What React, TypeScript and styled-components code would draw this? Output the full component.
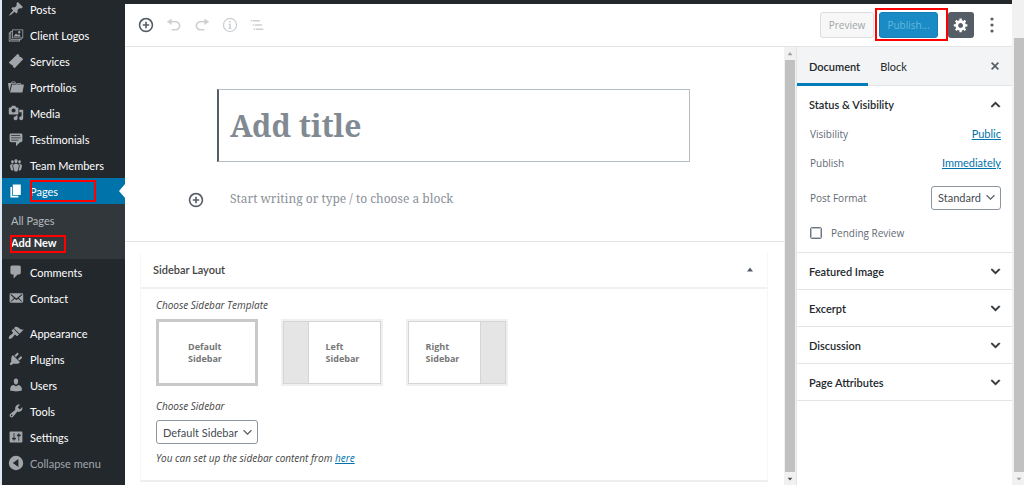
import React from "react";
import styled, { createGlobalStyle } from "styled-components";

const UI_FONT = `Lato, "Noto Sans", "Liberation Sans", sans-serif`;
const NOTE_FONT = `"Open Sans", "Noto Sans", "Liberation Sans", sans-serif`;
const SERIF_FONT = `"Noto Serif", "DejaVu Serif", serif`;

const GlobalStyle = createGlobalStyle`
  *, *::before, *::after { box-sizing: border-box; }
  body { margin: 0; background: #fff; }
  body, button, input, select, textarea {
    font-family: ${UI_FONT};
    font-size: 11px;
  }
  h2, p, ul, fieldset { margin: 0; padding: 0; }
  ul { list-style: none; }
`;

const ICONS = {
  pin: "M10.44 3.02l1.82-1.82 6.36 6.35-1.83 1.82c-1.05-.68-2.48-.57-3.41.36l-.75.75c-.92.93-1.04 2.35-.35 3.41l-1.83 1.82-2.41-2.41-2.8 2.79c-.42.42-3.38 2.71-3.8 2.29s1.86-3.39 2.28-3.81l2.79-2.79L4.1 9.36l1.83-1.82c1.05.69 2.48.57 3.4-.36l.75-.75c.93-.92 1.05-2.35.36-3.41z",
  images:
    "M5 3h14v11h-2v2h-2v2H1V7h2V5h2V3zm13 10V4H6v9h12zm-2-1H7l3-4 2 2 2-1zm-2-4a1.5 1.5 0 1 0 0-3 1.5 1.5 0 0 0 0 3zM16 15v-1H5V6H4v9h12zM14 17v-1H3V8H2v9h12z",
  ticket:
    "M12.2 1l2 2c-.5 1 .9 2.6 2.1 2l2.7 2.8L8.2 19l-2.2-2.1c.6-1.2-.9-2.7-2.1-2.100L1 12z",
  folder:
    "M4 5H.78c-.37 0-.74.32-.69.84l1.56 9.99S3.5 8.47 3.86 6.7c.11-.53.61-.7.98-.7H10s-.7-2.08-.77-2.31C9.11 3.25 8.89 3 8.45 3H5.14c-.36 0-.7.23-.8.64C4.25 4.04 4 5 4 5zm4.88 0h-4s.42-1 .87-1h2.13c.48 0 1 1 1 1zM2.67 16.25c-.31.47-.76.75-1.26.75h15.73c.54 0 .92-.31 1.03-.83.44-2.19 1.68-8.44 1.68-8.44.07-.5-.3-.73-.62-.73H16V5.53c0-.16-.26-.53-.66-.53h-3.76c-.52 0-.87.58-.87.58L10 7H5.59c-.32 0-.63.19-.69.5 0 0-1.59 6.7-1.72 7.33-.07.37-.22.99-.51 1.42zM15.38 7H11s.58-1 1.13-1h2.29c.71 0 .96 1 .96 1z",
  media:
    "M13 11V4c0-.55-.45-1-1-1h-1.67L9 1H5L3.67 3H2c-.55 0-1 .45-1 1v7c0 .55.45 1 1 1h10c.55 0 1-.45 1-1zM7 4.5c1.38 0 2.5 1.12 2.5 2.5S8.38 9.5 7 9.5 4.5 8.38 4.5 7 5.62 4.5 7 4.5zM14 6h5v10.5c0 1.38-1.12 2.5-2.5 2.5S14 17.88 14 16.5s1.12-2.5 2.5-2.5c.17 0 .34.02.5.05V9h-3V6zm-4 8.05V13h2v3.5c0 1.38-1.12 2.5-2.5 2.5S7 17.88 7 16.5 8.12 14 9.5 14c.17 0 .34.02.5.05z",
  testimonial:
    "M4 3h12c.55 0 1.02.2 1.41.59S18 4.45 18 5v7c0 .55-.2 1.02-.59 1.41S16.55 14 16 14h-1l-5 5v-5H4c-.55 0-1.02-.2-1.41-.59S2 12.55 2 12V5c0-.55.2-1.02.59-1.41S3.45 3 4 3zm11 2H4v1h11V5zm1 3H4v1h12V8zm-3 3H4v1h9v-1z",
  groups:
    "M8.03 4.46c-.29 1.28.55 3.46 1.97 3.46 1.41 0 2.25-2.18 1.96-3.46-.22-.98-1.08-1.63-1.96-1.63-.89 0-1.74.65-1.97 1.63zm-4.13.9c-.25 1.08.47 2.93 1.67 2.93s1.92-1.85 1.67-2.93c-.19-.83-.92-1.39-1.67-1.39s-1.48.56-1.67 1.39zm8.86 0c-.25 1.08.47 2.93 1.66 2.93 1.2 0 1.92-1.85 1.67-2.93-.19-.83-.92-1.39-1.67-1.39-.74 0-1.47.56-1.66 1.39zm-.59 11.43l1.25-4.3C14.2 10 12.71 8.47 10 8.47c-2.72 0-4.21 1.53-3.44 4.02l1.26 4.3C8.05 17.51 9 18 10 18c.98 0 1.94-.49 2.17-1.21zm-6.1-7.63c-.49.67-.96 1.83-.42 3.59l1.12 3.79c-.34.2-.77.31-1.2.31-.85 0-1.65-.41-1.85-1.03l-1.07-3.65c-.65-2.11.61-3.4 2.92-3.4.27 0 .54.02.79.06-.1.1-.2.22-.29.33zm8.35-.39c2.31 0 3.58 1.29 2.92 3.4l-1.07 3.65c-.2.62-1 1.03-1.85 1.03-.43 0-.86-.11-1.2-.31l1.11-3.77c.55-1.78.08-2.94-.42-3.61-.08-.11-.18-.23-.28-.33.25-.04.51-.06.79-.06z",
  page: "M6 15V2h10v13H6zm-1 1h8v2H3V5h2v11z",
  comment: "M5 2h9c1.1 0 2 .9 2 2v7c0 1.1-.9 2-2 2h-2l-5 5v-5H5c-1.1 0-2-.9-2-2V4c0-1.1.9-2 2-2z",
  email:
    "M19 14.5v-9c0-.83-.67-1.5-1.5-1.5H3.49c-.83 0-1.5.67-1.5 1.5v9c0 .83.67 1.5 1.5 1.5H17.5c.83 0 1.5-.67 1.5-1.5zm-1.31-9.11c.33.33.15.67-.03.84L13.6 9.95l3.9 4.06c.12.14.2.36.06.51-.13.16-.43.15-.56.05l-4.37-3.73-2.14 1.95-2.13-1.95-4.37 3.73c-.13.1-.43.11-.56-.05-.14-.15-.06-.37.06-.51l3.9-4.06-4.06-3.72c-.18-.17-.36-.51-.03-.84s.67-.17.95.07l6.24 5.04 6.25-5.04c.28-.24.62-.4.95-.07z",
  brush:
    "M14.48 11.06L7.41 3.99l1.5-1.5c.5-.56 2.3-.47 3.51.32 1.21.8 1.43 1.28 2.91 2.1 1.18.64 2.45 1.26 4.45.85zm-.71.71L6.7 4.7 4.93 6.47c-.39.39-.39 1.02 0 1.41l1.06 1.06c.39.39.39 1.03 0 1.42-.6.6-1.43 1.11-2.21 1.69-.35.26-.7.53-1.01.84C1.43 14.23.4 16.08 1.4 17.07c.99 1 2.84-.03 4.18-1.36.31-.31.58-.66.85-1.02.57-.78 1.08-1.61 1.69-2.21.39-.39 1.02-.39 1.41 0l1.06 1.06c.39.39 1.02.39 1.41 0z",
  plug: "M13.11 4.36L9.87 7.6 8 5.73l3.24-3.24c.35-.34 1.05-.2 1.56.32.52.51.66 1.21.31 1.55zm-8 1.77l.91-1.12 9.01 9.01-1.19.84c-.71.71-2.63 1.16-3.82 1.16H6.14L4.9 17.26c-.59.59-1.54.59-2.12 0-.59-.58-.59-1.53 0-2.12l1.24-1.24v-3.88c0-1.13.4-3.19 1.09-3.89zm7.26 3.97l3.24-3.24c.34-.35 1.04-.21 1.55.31.52.51.66 1.21.31 1.55l-3.24 3.25z",
  user: "M10 9.25c-2.27 0-2.73-3.44-2.73-3.44C7 4.02 7.82 2 9.97 2c2.16 0 2.98 2.02 2.71 3.81 0 0-.41 3.44-2.68 3.44zm0 2.57L12.72 10c2.39 0 4.52 2.33 4.52 4.53v2.49s-3.65 1.13-7.24 1.13c-3.65 0-7.24-1.13-7.24-1.13v-2.49c0-2.25 1.94-4.48 4.47-4.48z",
  wrench:
    "M16.68 9.77c-1.34 1.34-3.3 1.67-4.95.99l-5.41 6.52c-.99.99-2.59.99-3.58 0s-.99-2.59 0-3.57l6.52-5.42c-.68-1.65-.35-3.61.99-4.95 1.28-1.28 3.12-1.62 4.72-1.06l-2.89 2.89 2.82 2.82 2.86-2.87c.53 1.58.18 3.39-1.08 4.65zM3.81 16.21c.4.39 1.04.39 1.43 0 .4-.4.4-1.04 0-1.43-.39-.4-1.03-.4-1.43 0-.39.39-.39 1.03 0 1.43z",
  sliders:
    "M18 16V4c0-.55-.45-1-1-1H3c-.55 0-1 .45-1 1v12c0 .55.45 1 1 1h14c.55 0 1-.45 1-1zM8 11h1c.55 0 1 .45 1 1s-.45 1-1 1H8v1.5c0 .28-.22.5-.5.5s-.5-.22-.5-.5V13H6c-.55 0-1-.45-1-1s.45-1 1-1h1V5.5c0-.28.22-.5.5-.5s.5.22.5.5V11zm5-2h-1c-.55 0-1-.45-1-1s.45-1 1-1h1V5.5c0-.28.22-.5.5-.5s.5.22.5.5V7h1c.55 0 1 .45 1 1s-.45 1-1 1h-1v5.5c0 .28-.22.5-.5.5s-.5-.22-.5-.5V9z",
  collapse: "M10 1a9 9 0 1 0 0 18 9 9 0 0 0 0-18zM13 5v10l-7-5z",
  insert:
    "M10 1c-5 0-9 4-9 9s4 9 9 9 9-4 9-9-4-9-9-9zm0 16c-3.9 0-7-3.1-7-7s3.1-7 7-7 7 3.1 7 7-3.1 7-7 7zm1-11H9v3H6v2h3v3h2v-3h3V9h-3V6z",
  undo: "M12 5H7V2L1 6l6 4V7h5c2.2 0 4 1.8 4 4s-1.8 4-4 4H7v2h5c3.3 0 6-2.7 6-6s-2.7-6-6-6z",
  redo: "M8 5h5V2l6 4-6 4V7H8c-2.2 0-4 1.8-4 4s1.8 4 4 4h5v2H8c-3.3 0-6-2.7-6-6s2.7-6 6-6z",
  info: "M10 1a9 9 0 1 0 0 18 9 9 0 0 0 0-18zm0 16.4a7.4 7.4 0 1 1 0-14.8 7.4 7.4 0 0 1 0 14.8zM9 5h2v2H9zM8 8.5h3V14h1v1H8v-1h1V9.5H8z",
  outline: "M1 3h2v2H1zM4 3h10v2H4zM4 9h2v2H4zM7 9h10v2H7zM5 15h2v2H5zM8 15h11v2H8z",
  gear: "M18 12h-2.18c-.17.7-.44 1.35-.81 1.93l1.54 1.54-2.1 2.1-1.54-1.54c-.58.36-1.23.63-1.91.79V19H8v-2.18c-.68-.16-1.33-.43-1.91-.79l-1.54 1.54-2.12-2.12 1.54-1.54c-.36-.58-.63-1.23-.79-1.91H1V9.03h2.17c.16-.7.44-1.35.8-1.94L2.43 5.55l2.1-2.1 1.54 1.54c.58-.37 1.24-.64 1.93-.81V2h3v2.18c.68.16 1.33.43 1.91.79l1.54-1.54 2.12 2.12-1.54 1.54c.36.59.64 1.24.8 1.94H18V12zm-8.5 1.5c1.66 0 3-1.34 3-3s-1.34-3-3-3-3 1.34-3 3 1.34 3 3 3z",
  dots: "M10 4.500a2 2 0 1 0 0-4 2 2 0 0 0 0 4zM10 12a2 2 0 1 0 0-4 2 2 0 0 0 0 4zM10 19.500a2 2 0 1 0 0-4 2 2 0 0 0 0 4z",
  down: "M5 6l5 5 5-5 2 1-7 7-7-7z",
  up: "M15 14l-5-5-5 5-2-1 7-7 7 7z",
  close:
    "M14.95 6.46L11.41 10l3.54 3.54-1.41 1.41L10 11.42l-3.53 3.53-1.42-1.42L8.58 10 5.05 6.47l1.42-1.42L10 8.58l3.54-3.53z",
  triangleUp: "M4 13l6-8 6 8z",
  triangleDown: "M4 7h12l-6 7z",
};

type IconName = keyof typeof ICONS;

const Glyph = styled.svg<{ $size: number; $bold?: boolean }>`
  display: block;
  flex: none;
  width: ${(p) => p.$size}px;
  height: ${(p) => p.$size}px;
  fill: currentColor;
  stroke: ${(p) => (p.$bold ? "currentColor" : "none")};
`;

function Icon({ name, size = 16, bold }: { name: IconName; size?: number; bold?: boolean }) {
  return (
    <Glyph $size={size} $bold={bold} viewBox="0 0 20 20" aria-hidden="true">
      <path fillRule="evenodd" d={ICONS[name]} />
    </Glyph>
  );
}

const Page = styled.div`
  display: flex;
  height: 100vh;
  overflow: hidden;
  padding-left: 2px;
  background: #dfeaf5;
`;

/* Admin menu */

const AdminMenu = styled.nav`
  flex: none;
  width: 123px;
  overflow: hidden;
  background: #23282d;
`;

const MenuList = styled.ul`
  margin-top: -4px;
`;

const MenuItem = styled.li<{ $spaced?: boolean }>`
  margin-top: ${(p) => (p.$spaced ? 9 : 0)}px;
`;

const MenuLink = styled.a<{ $current?: boolean; $muted?: boolean }>`
  position: relative;
  display: flex;
  align-items: center;
  gap: 6px;
  height: 26px;
  padding-left: 6px;
  text-decoration: none;
  white-space: nowrap;
  color: ${(p) => (p.$muted ? "#a0a5aa" : "#fff")};
  background: ${(p) => (p.$current ? "#0073aa" : "transparent")};

  svg {
    color: ${(p) => (p.$current ? "#fff" : "#a0a5aa")};
  }
`;

const CurrentArrow = styled.span`
  position: absolute;
  top: 6px;
  right: 0;
  border: 7px solid transparent;
  border-left-width: 0;
  border-right: 6px solid #fff;
`;

const SubMenu = styled.ul`
  padding: 6px 0 5px;
  background: #32373c;
`;

const SubLink = styled.a<{ $current?: boolean }>`
  position: relative;
  display: block;
  height: 22px;
  padding-left: 9px;
  line-height: 22px;
  text-decoration: none;
  color: ${(p) => (p.$current ? "#fff" : "#b4b9be")};
  font-weight: ${(p) => (p.$current ? 700 : 400)};
`;

const Highlight = styled.span<{ $inset: string }>`
  position: absolute;
  inset: ${(p) => p.$inset};
  border: 2px solid #f00;
  pointer-events: none;
`;

/* Editor frame */

const Editor = styled.div`
  flex: 1;
  min-width: 0;
  display: flex;
  flex-direction: column;
  border-top: 4px solid #23282d;
  background: #fff;
`;

const Toolbar = styled.header`
  display: flex;
  align-items: center;
  justify-content: space-between;
  height: 43px;
  flex: none;
  padding: 0 12px 0 13px;
  border-bottom: 1px solid #e2e4e7;
`;

const Tools = styled.div`
  display: flex;
  align-items: center;
  gap: 12px;
`;

const Actions = styled.div`
  display: flex;
  align-items: center;
  gap: 10px;
`;

const IconButton = styled.button`
  display: grid;
  place-items: center;
  padding: 0;
  border: 0;
  background: none;
  color: #555d66;

  &:disabled {
    color: #cdd0d3;
  }
`;

const SaveButtons = styled.div`
  display: flex;
  gap: 5px;
`;

const PreviewButton = styled.button`
  width: 54px;
  height: 26px;
  padding: 0;
  border: 1px solid #ddd;
  border-radius: 3px;
  background: #f7f7f7;
  color: #a0a5aa;
  font-family: ${NOTE_FONT};
  font-size: 10px;
`;

const PublishWrap = styled.div`
  position: relative;
`;

const PublishButton = styled(PreviewButton)`
  display: block;
  width: 59px;
  border-color: #1580b8;
  background: #1a8bc4;
  color: #66b8de;
`;

const SettingsButton = styled.button`
  display: grid;
  place-items: center;
  width: 26px;
  height: 26px;
  padding: 0;
  border: 0;
  border-radius: 3px;
  background: #555d66;
  color: #fff;
`;

const Workspace = styled.div`
  flex: 1;
  min-height: 0;
  display: flex;
`;

const Canvas = styled.main`
  flex: 1;
  min-width: 0;
  overflow: hidden;
`;

const Scrollbar = styled.div<{ $start?: number; $edge?: boolean }>`
  flex: none;
  width: 12px;
  display: flex;
  flex-direction: column;
  align-items: ${(p) => (p.$edge ? "flex-end" : "center")};
  padding-top: ${(p) => p.$start ?? 0}px;
  background: #f1f1f1;
`;

const ScrollArrow = styled.span<{ $muted?: boolean }>`
  display: grid;
  place-items: center;
  width: 10px;
  height: 13px;
  color: ${(p) => (p.$muted ? "#a0a0a0" : "#505050")};
`;

const ScrollThumb = styled.span`
  flex: 1;
  width: 10px;
  background: #c1c1c1;
`;

/* Writing area */

const Writing = styled.section`
  padding: 42px 94px 0 92px;
  height: 195px;
  border-bottom: 1px solid #e2e4e7;
`;

const TitleInput = styled.input`
  display: block;
  width: 100%;
  height: 73px;
  padding: 0 11px;
  border: 1px solid #b5bcc2;
  border-left: 2px solid #555d66;
  outline: 0;
  font-family: ${SERIF_FONT};
  font-size: 30px;
  font-weight: 700;

  &::placeholder {
    color: #818a93;
    opacity: 1;
  }
`;

const BlockRow = styled.div`
  display: flex;
  align-items: center;
  gap: 26px;
  margin: 28px 0 0 -29px;
`;

const BlockPrompt = styled.input`
  flex: 1;
  min-width: 0;
  height: 20px;
  padding: 0 0 3px;
  border: 0;
  outline: 0;
  font-family: ${SERIF_FONT};
  font-size: 12px;

  &::placeholder {
    color: #8b9198;
    opacity: 1;
  }
`;

/* Sidebar layout box */

const MetaBox = styled.section`
  margin: 10px 16px 0 15px;
  border: 1px solid #f7f7f7;
  border-top: 0;
  border-bottom: 2px solid #eee;
`;

const MetaHeader = styled.div`
  display: flex;
  align-items: center;
  justify-content: space-between;
  height: 37px;
  padding: 0 12px;
  border-bottom: 2px solid #f1f1f1;
`;

const MetaTitle = styled.h2`
  font-size: 11px;
  font-weight: 600;
  color: #444;
`;

const MetaBody = styled.div`
  display: flex;
  flex-direction: column;
  align-items: flex-start;
  padding: 6px 15px 12px;
`;

const Hint = styled.p`
  height: 20px;
  line-height: 20px;
  font-family: ${NOTE_FONT};
  font-size: 10px;
  font-style: italic;
  color: #444;

  a {
    color: #0073aa;
  }
`;

const Templates = styled.div`
  display: flex;
  gap: 23px;
  margin: 4px 0 10px;
`;

const Template = styled.button<{ $selected?: boolean }>`
  display: flex;
  width: 102px;
  height: 67px;
  padding: 0;
  border: ${(p) => (p.$selected ? "3px solid #c9c9c9" : "2px solid #f0f0f0")};
  background: #fff;
  color: #777;
  font-family: ${NOTE_FONT};
  font-size: 9px;
  font-weight: 700;
  line-height: 12px;
  text-align: left;
`;

const TemplateFrame = styled.span<{ $framed?: boolean }>`
  flex: 1;
  align-self: stretch;
  display: flex;
  border: 1px solid ${(p) => (p.$framed ? "#d5d5d5" : "#fff")};
`;

const TemplateRail = styled.span<{ $side: "left" | "right" }>`
  width: 25px;
  background: #e5e5e5;
  border-${(p) => (p.$side === "left" ? "right" : "left")}: 1px solid #d5d5d5;
`;

const TemplateLabel = styled.span`
  flex: 1;
  display: grid;
  place-items: center;
`;

const TemplateText = styled.span`
  width: 38px;
`;

const SelectWrap = styled.span`
  display: inline-grid;
  align-items: center;
  color: #555d66;

  select,
  svg {
    grid-area: 1 / 1;
  }

  svg {
    justify-self: end;
    margin-right: 4px;
    pointer-events: none;
  }
`;

const MetaSelect = styled(SelectWrap)`
  margin: 4px 0;
`;

const Select = styled.select`
  appearance: none;
  height: 24px;
  padding: 0 19px 0 6px;
  border: 1px solid #8d96a0;
  border-radius: 3px;
  background: #fff;
  color: #444b52;
`;

/* Settings panel */

const Settings = styled.aside`
  flex: none;
  width: 216px;
  border-left: 1px solid #e2e4e7;
  background: #fff;
`;

const Tabs = styled.div`
  display: flex;
  align-items: center;
  height: 39px;
  padding-right: 9px;
  border-bottom: 1px solid #e2e4e7;
  background: #f3f4f5;
`;

const Tab = styled.button<{ $active?: boolean }>`
  height: 39px;
  padding: 3px 8px 0 12px;
  border: 0;
  border-bottom: 3px solid ${(p) => (p.$active ? "#007cba" : "transparent")};
  background: none;
  color: #23282d;
  font-weight: ${(p) => (p.$active ? 600 : 400)};
`;

const CloseButton = styled(IconButton)`
  margin-left: auto;
`;

const Panel = styled.section`
  border-bottom: 1px solid #e2e4e7;
`;

const PanelToggle = styled.button`
  display: flex;
  align-items: center;
  justify-content: space-between;
  width: 100%;
  height: 36px;
  padding: 0 10px 0 12px;
  border: 0;
  background: none;
  color: #23282d;
  font-weight: 600;
`;

const PanelBody = styled.div`
  display: flex;
  flex-direction: column;
  padding: 0 11px 9px 13px;
  color: #5f6a74;
  font-family: ${NOTE_FONT};
  font-size: 10px;
`;

const Row = styled.div<{ $height: number }>`
  display: flex;
  align-items: center;
  justify-content: space-between;
  height: ${(p) => p.$height}px;

  a {
    color: #0073aa;
    font-family: ${UI_FONT};
    font-size: 11px;
  }
`;

const CheckLabel = styled.label`
  display: flex;
  align-items: center;
  gap: 9px;
  height: 20px;
  margin-top: 8px;
`;

const Checkbox = styled.input`
  appearance: none;
  width: 12px;
  height: 12px;
  margin: 0;
  border: 1px solid #6c7781;
  outline: 1px solid #b9c0c6;
  outline-offset: -2px;
  border-radius: 2px;
  background: #fff;
`;

type Entry = { label: string; icon: IconName; spaced?: boolean };

const topItems: Entry[] = [
  { label: "Posts", icon: "pin" },
  { label: "Client Logos", icon: "images" },
  { label: "Services", icon: "ticket" },
  { label: "Portfolios", icon: "folder" },
  { label: "Media", icon: "media" },
  { label: "Testimonials", icon: "testimonial" },
  { label: "Team Members", icon: "groups" },
];

const bottomItems: Entry[] = [
  { label: "Comments", icon: "comment" },
  { label: "Contact", icon: "email" },
  { label: "Appearance", icon: "brush", spaced: true },
  { label: "Plugins", icon: "plug" },
  { label: "Users", icon: "user" },
  { label: "Tools", icon: "wrench" },
  { label: "Settings", icon: "sliders" },
];

const closedPanels = ["Featured Image", "Excerpt", "Discussion", "Page Attributes"];

function MenuEntry({ label, icon, spaced }: Entry) {
  return (
    <MenuItem $spaced={spaced}>
      <MenuLink href="#">
        <Icon name={icon} />
        {label}
      </MenuLink>
    </MenuItem>
  );
}

function TemplateOption({
  first,
  rail,
  selected,
}: {
  first: string;
  rail?: "left" | "right";
  selected?: boolean;
}) {
  return (
    <Template type="button" $selected={selected} aria-pressed={!!selected}>
      <TemplateFrame $framed={!!rail}>
        {rail === "left" && <TemplateRail $side="left" />}
        <TemplateLabel>
          <TemplateText>
            {first}
            <br />
            Sidebar
          </TemplateText>
        </TemplateLabel>
        {rail === "right" && <TemplateRail $side="right" />}
      </TemplateFrame>
    </Template>
  );
}

export default function App() {
  return (
    <>
      <GlobalStyle />
      <Page>
        <AdminMenu aria-label="Main menu">
          <MenuList>
            {topItems.map((item) => (
              <MenuEntry key={item.label} {...item} />
            ))}
            <MenuItem>
              <MenuLink href="#" $current aria-current="true">
                <Icon name="page" />
                Pages
                <CurrentArrow />
                <Highlight $inset="2px 29px 2px 28px" />
              </MenuLink>
              <SubMenu>
                <li>
                  <SubLink href="#">All Pages</SubLink>
                </li>
                <li>
                  <SubLink href="#" $current aria-current="page">
                    Add New
                    <Highlight $inset="3px 59px 1px 8px" />
                  </SubLink>
                </li>
              </SubMenu>
            </MenuItem>
            {bottomItems.map((item) => (
              <MenuEntry key={item.label} {...item} />
            ))}
            <MenuItem>
              <MenuLink href="#" $muted>
                <Icon name="collapse" />
                Collapse menu
              </MenuLink>
            </MenuItem>
          </MenuList>
        </AdminMenu>

        <Editor>
          <Toolbar>
            <Tools>
              <IconButton type="button" aria-label="Add block">
                <Icon name="insert" />
              </IconButton>
              <IconButton type="button" aria-label="Undo" disabled>
                <Icon name="undo" />
              </IconButton>
              <IconButton type="button" aria-label="Redo" disabled>
                <Icon name="redo" />
              </IconButton>
              <IconButton type="button" aria-label="Content structure" disabled>
                <Icon name="info" />
              </IconButton>
              <IconButton type="button" aria-label="Block navigation" disabled>
                <Icon name="outline" size={14} />
              </IconButton>
            </Tools>
            <Actions>
              <SaveButtons>
                <PreviewButton type="button">Preview</PreviewButton>
                <PublishWrap>
                  <PublishButton type="button">Publish...</PublishButton>
                  <Highlight $inset="-4px -10px -3px -4px" />
                </PublishWrap>
              </SaveButtons>
              <SettingsButton type="button" aria-label="Settings">
                <Icon name="gear" />
              </SettingsButton>
              <IconButton type="button" aria-label="More options">
                <Icon name="dots" />
              </IconButton>
            </Actions>
          </Toolbar>

          <Workspace>
            <Canvas>
              <Writing>
                <TitleInput aria-label="Add title" placeholder="Add title" />
                <BlockRow>
                  <IconButton type="button" aria-label="Add block">
                    <Icon name="insert" />
                  </IconButton>
                  <BlockPrompt
                    aria-label="Block content"
                    placeholder="Start writing or type / to choose a block"
                  />
                </BlockRow>
              </Writing>

              <MetaBox>
                <MetaHeader>
                  <MetaTitle>Sidebar Layout</MetaTitle>
                  <IconButton type="button" aria-label="Toggle Sidebar Layout">
                    <Icon name="triangleUp" size={10} />
                  </IconButton>
                </MetaHeader>
                <MetaBody>
                  <Hint>Choose Sidebar Template</Hint>
                  <Templates>
                    <TemplateOption first="Default" selected />
                    <TemplateOption first="Left" rail="left" />
                    <TemplateOption first="Right" rail="right" />
                  </Templates>
                  <Hint as="label" htmlFor="sidebar-select">
                    Choose Sidebar
                  </Hint>
                  <MetaSelect>
                    <Select id="sidebar-select">
                      <option>Default Sidebar</option>
                    </Select>
                    <Icon name="down" size={13} />
                  </MetaSelect>
                  <Hint>
                    You can set up the sidebar content from <a href="#">here</a>
                  </Hint>
                </MetaBody>
              </MetaBox>
            </Canvas>

            <Scrollbar aria-hidden="true">
              <ScrollArrow $muted>
                <Icon name="triangleUp" size={8} />
              </ScrollArrow>
              <ScrollThumb />
              <ScrollArrow>
                <Icon name="triangleDown" size={8} />
              </ScrollArrow>
            </Scrollbar>

            <Settings aria-label="Document settings">
              <Tabs>
                <Tab type="button" $active>
                  Document
                </Tab>
                <Tab type="button">Block</Tab>
                <CloseButton type="button" aria-label="Close settings">
                  <Icon name="close" />
                </CloseButton>
              </Tabs>
              <Panel>
                <PanelToggle type="button" aria-expanded="true">
                  Status &amp; Visibility
                  <Icon name="up" size={13} bold />
                </PanelToggle>
                <PanelBody>
                  <Row $height={23}>
                    <span>Visibility</span>
                    <a href="#">Public</a>
                  </Row>
                  <Row $height={35}>
                    <span>Publish</span>
                    <a href="#">Immediately</a>
                  </Row>
                  <Row $height={35}>
                    <label htmlFor="post-format">Post Format</label>
                    <SelectWrap>
                      <Select id="post-format">
                        <option>Standard</option>
                      </Select>
                      <Icon name="down" size={13} />
                    </SelectWrap>
                  </Row>
                  <CheckLabel>
                    <Checkbox type="checkbox" />
                    Pending Review
                  </CheckLabel>
                </PanelBody>
              </Panel>
              {closedPanels.map((name) => (
                <Panel key={name}>
                  <PanelToggle type="button" aria-expanded="false">
                    {name}
                    <Icon name="down" size={13} bold />
                  </PanelToggle>
                </Panel>
              ))}
            </Settings>
          </Workspace>
        </Editor>

        <Scrollbar $start={38} $edge aria-hidden="true">
          <ScrollThumb />
          <ScrollArrow $muted>
            <Icon name="triangleDown" size={8} />
          </ScrollArrow>
        </Scrollbar>
      </Page>
    </>
  );
}
